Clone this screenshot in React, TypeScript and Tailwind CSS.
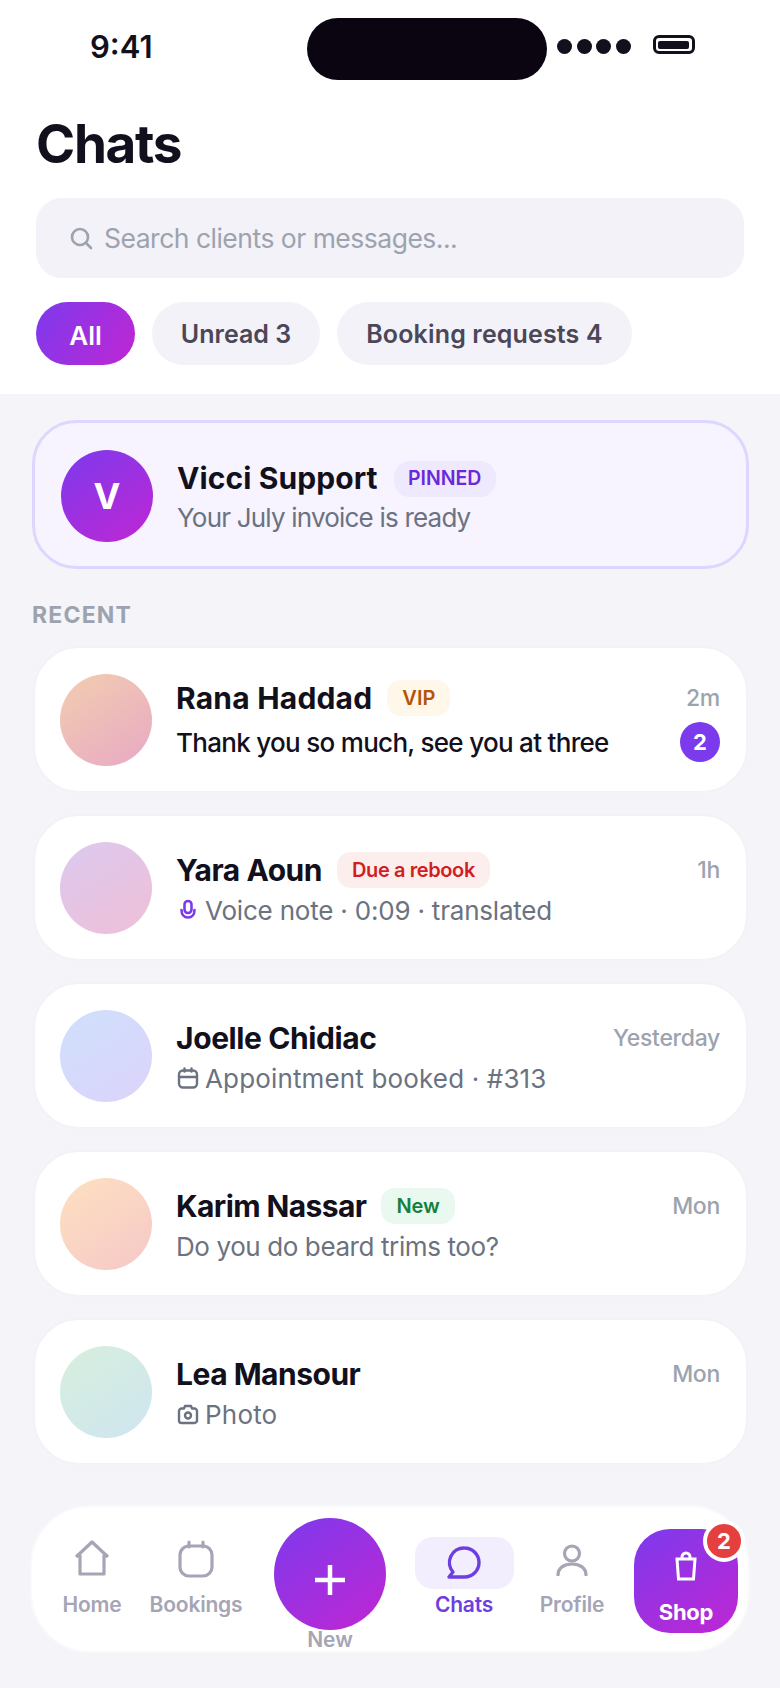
import React from "react";

const font = { fontFamily: "Inter, 'Liberation Sans', sans-serif" };

function Mic() {
  return (
    <svg width="24" height="22" viewBox="0 0 24 22" fill="none" stroke="#7c3aed" strokeWidth="2.6" strokeLinecap="round" className="shrink-0">
      <rect x="8.500" y="2" width="7" height="12" rx="3.500" />
      <path d="M5.500 11c0 4.500 2.500 7.500 6.500 7.500s6.500-3 6.500-7.500" />
    </svg>
  );
}
function Cal() {
  return (
    <svg width="24" height="22" viewBox="0 0 24 22" fill="none" stroke="#6b7280" strokeWidth="2.4" strokeLinecap="round" className="shrink-0">
      <rect x="3" y="3.500" width="18" height="17" rx="4" />
      <path d="M3 10h18M8.500 1.500v3M15.500 1.500v3" />
    </svg>
  );
}
function Cam() {
  return (
    <svg width="24" height="22" viewBox="0 0 24 22" fill="none" stroke="#6b7280" strokeWidth="2.4" strokeLinejoin="round" className="shrink-0">
      <path d="M3 8a2.500 2.500 0 0 1 2.500-2.500H8L9 3h6l1 2.500h2.500A2.500 2.500 0 0 1 21 8v9.500a2.500 2.500 0 0 1-2.500 2.500h-13A2.500 2.500 0 0 1 3 17.500z" />
      <circle cx="12" cy="12.500" r="3" />
    </svg>
  );
}

type Row = {
  name: string;
  nameCls: string;
  time: string;
  grad: string;
  tag?: React.ReactNode;
  msg: React.ReactNode;
  msgCls: string;
  unread?: boolean;
};

const rows: Row[] = [
  {
    name: "Rana Haddad",
    nameCls: "tracking-[0.2px]",
    time: "2m",
    grad: "bg-[linear-gradient(145deg,#f2cdb0,#e8a9c4)]",
    tag: <span className="ml-[15px] h-[36px] px-[15px] rounded-[14px] bg-[#fff7ea] text-[#b4540a] text-[20px] font-semibold flex items-center">VIP</span>,
    msg: <span className="text-[#12101c] font-medium">Thank you so much, see you at three</span>,
    msgCls: "tracking-[-0.7px]",
    unread: true,
  },
  {
    name: "Yara Aoun",
    nameCls: "tracking-[-0.45px]",
    time: "1h",
    grad: "bg-[linear-gradient(145deg,#dcc9f0,#efbfd6)]",
    tag: <span className="ml-[15px] h-[36px] px-[15px] rounded-[14px] bg-[#fdeeee] text-[#cf1f1f] text-[20px] font-semibold flex items-center tracking-[-0.4px]">Due a rebook</span>,
    msg: <span className="flex items-center gap-[5px]"><Mic />Voice note · 0:09 · translated</span>,
    msgCls: "tracking-[-0.2px]",
  },
  {
    name: "Joelle Chidiac",
    nameCls: "tracking-[-0.4px]",
    time: "Yesterday",
    grad: "bg-[linear-gradient(145deg,#cfe0fb,#dcd3fb)]",
    msg: <span className="flex items-center gap-[5px]"><Cal />Appointment booked · #313</span>,
    msgCls: "tracking-[0.15px]",
  },
  {
    name: "Karim Nassar",
    nameCls: "tracking-[-0.6px]",
    time: "Mon",
    grad: "bg-[linear-gradient(145deg,#fde0c0,#f6c8c8)]",
    tag: <span className="ml-[15px] h-[36px] px-[15px] rounded-[14px] bg-[#e9f9ef] text-[#15803d] text-[20px] font-semibold flex items-center">New</span>,
    msg: "Do you do beard trims too?",
    msgCls: "tracking-[-0.4px]",
  },
  {
    name: "Lea Mansour",
    nameCls: "tracking-[-0.5px]",
    time: "Mon",
    grad: "bg-[linear-gradient(145deg,#d6efdc,#cfe5f1)]",
    msg: <span className="flex items-center gap-[5px]"><Cam />Photo</span>,
    msgCls: "tracking-[0.2px]",
  },
];

function ChatRow({ r }: { r: Row }) {
  return (
    <div className="h-[147px] rounded-[46px] bg-white border-2 border-[#f2f2f7] flex items-center pl-[25px] pr-[26px]">
      <div className={`w-[92px] h-[92px] rounded-full shrink-0 ${r.grad}`} />
      <div className={`ml-[24px] flex-1 min-w-0 self-stretch ${r.unread ? "pt-[30px]" : "pt-[34px]"}`}>
        <div className="flex items-center h-[40px]">
          <span className={`text-[30px] font-bold text-[#12101c] ${r.nameCls}`}>{r.name}</span>
          {r.tag}
        </div>
        <div className={`${r.unread ? "mt-[4px]" : "mt-0"} h-[40px] flex items-center text-[26px] text-[#6b7280] ${r.msgCls}`}>{r.msg}</div>
      </div>
      <div className={`self-stretch flex flex-col items-end ${r.unread ? "pt-[35px]" : "pt-[39px]"}`}>
        <span className="text-[23px] leading-[30px] text-[#9ca3af] font-medium tracking-[-0.3px]">{r.time}</span>
        {r.unread && (
          <span className="mt-[9px] w-[40px] h-[40px] rounded-full bg-[#7c3aed] text-white text-[22px] font-bold flex items-center justify-center">2</span>
        )}
      </div>
    </div>
  );
}

function NavItem({ label, children, w }: { label: string; children: React.ReactNode; w: string }) {
  return (
    <div className={`flex flex-col items-center ${w}`}>
      <div className="h-[60px] flex items-center justify-center">{children}</div>
      <span className="mt-[1px] text-[21px] leading-[28px] font-semibold tracking-[-0.2px] text-[#a5a5b5]">{label}</span>
    </div>
  );
}

export default function App() {
  return (
    <div style={font} className="w-[780px] h-[1688px] bg-[#f4f4f9] overflow-hidden flex flex-col">
      <header className="h-[394px] shrink-0 bg-white px-[36px] flex flex-col">
        <div className="h-[98px] flex items-start pt-[18px]">
          <span className="ml-[54px] mt-[11px] text-[31px] leading-[36px] font-semibold text-[#12101c] w-[217px]">9:41</span>
          <div className="w-[240px] h-[62px] rounded-full bg-[#0a0510]" />
          <div className="ml-[10px] mt-[21px] flex gap-[4.500px]">
            <i className="block w-[15px] h-[15px] rounded-full bg-[#12101c]" />
            <i className="block w-[15px] h-[15px] rounded-full bg-[#12101c]" />
            <i className="block w-[15px] h-[15px] rounded-full bg-[#12101c]" />
            <i className="block w-[15px] h-[15px] rounded-full bg-[#12101c]" />
          </div>
          <div className="ml-[22px] mt-[17px] w-[42px] h-[19px] rounded-[6px] border-[3px] border-[#12101c] p-[2.500px]">
            <div className="w-full h-full rounded-[2px] bg-[#12101c]" />
          </div>
        </div>
        <h1 className="mt-[16px] text-[53px] leading-[60px] font-bold text-[#12101c] tracking-[-1.300px]">Chats</h1>
        <div className="mt-[24px] h-[80px] rounded-[26px] bg-[#f2f2f8] flex items-center pl-[33px]">
          <svg width="24" height="24" viewBox="0 0 24 24" fill="none" stroke="#9ca3af" strokeWidth="2.600" strokeLinecap="round">
            <circle cx="11" cy="11" r="8" />
            <path d="m17 17 5 5" />
          </svg>
          <span className="ml-[11px] pt-[2px] text-[26.500px] text-[#9ca3af] tracking-[-0.5px]">Search clients or messages...</span>
        </div>
        <div className="mt-[24px] flex gap-[17px]">
          <span className="w-[99px] h-[63px] pt-[3px] rounded-full bg-[linear-gradient(120deg,#7c3aed,#c026d3)] text-white text-[26px] font-semibold flex items-center justify-center">All</span>
          <span className="w-[168px] h-[63px] pt-[3px] rounded-full bg-[#f2f2f8] text-[#4b4658] text-[25px] font-semibold flex items-center justify-center">Unread 3</span>
          <span className="w-[295px] h-[63px] pt-[3px] rounded-full bg-[#f2f2f8] text-[#4b4658] text-[25px] font-semibold flex items-center justify-center tracking-[0.15px]">Booking requests 4</span>
        </div>
      </header>

      <main className="flex-1 flex flex-col pl-[32px] pr-[31px] pt-[26px]">
        <div className="h-[149px] rounded-[44px] bg-[#f7f3ff] border-[3px] border-[#ddd6fe] flex items-center pl-[26px]">
          <div className="mt-[2px] w-[92px] h-[92px] rounded-full bg-[linear-gradient(145deg,#7c3aed,#c026d3)] text-white text-[36px] font-bold flex items-center justify-center">V</div>
          <div className="ml-[24px] pt-[5px]">
            <div className="flex items-center h-[40px]">
              <span className="text-[30px] font-bold text-[#12101c] tracking-[0.1px]">Vicci Support</span>
              <span className="ml-[16px] w-[102px] h-[36px] rounded-[16px] bg-[#eee9fd] text-[#6d28d9] text-[19.500px] font-semibold flex items-center justify-center">PINNED</span>
            </div>
            <div className="mt-[1px] text-[26px] leading-[36px] text-[#6b7280] tracking-[-0.8px]">Your July invoice is ready</div>
          </div>
        </div>
        <div className="mt-[32px] text-[23px] leading-[28px] font-bold text-[#9ca3af] tracking-[1.200px]">RECENT</div>
        <div className="mt-[17px] mx-[1px] flex flex-col gap-[21px]">
          {rows.map((r) => (
            <ChatRow key={r.name} r={r} />
          ))}
        </div>
      </main>

      <nav className="mx-[30px] mb-[35px] h-[148px] rounded-[60px] bg-white border-2 border-[#f9f9fb] shrink-0 flex items-start pt-[23px] pl-[12px]">
        <NavItem label="Home" w="w-[96px]">
          <svg width="36" height="36" viewBox="0 0 36 36" fill="none" stroke="#a5a5b5" strokeWidth="3.200" strokeLinejoin="round" className="-mt-[4px]">
            <path d="M2 17 18 2l16 15M6 15v19h24V15" />
          </svg>
        </NavItem>
        <NavItem label="Bookings" w="w-[100px] ml-[6px]">
          <svg width="36" height="38" viewBox="0 0 36 38" fill="none" stroke="#a5a5b5" strokeWidth="3.200" strokeLinecap="round" className="-mt-[2px]">
            <rect x="2" y="6" width="32" height="30" rx="9" />
            <path d="M11 2v5M25 2v5" />
          </svg>
        </NavItem>
        <div className="ml-[28px] w-[112px] flex flex-col items-center -mt-[12px]">
          <div className="w-[112px] h-[112px] rounded-full bg-[linear-gradient(145deg,#7c3aed,#c026d3)] flex items-center justify-center pt-[12px]">
            <svg width="30" height="30" viewBox="0 0 30 30" stroke="#fff" strokeWidth="4.500">
              <path d="M15 0v30M0 15h30" />
            </svg>
          </div>
          <span className="text-[21px] leading-[20px] font-semibold text-[#a5a5b5]">New</span>
        </div>
        <div className="ml-[28px] w-[100px] flex flex-col items-center">
          <div className="w-[99px] h-[52px] mt-[7px] rounded-[18px] bg-[#f3eefe] flex items-center justify-center">
            <svg width="36" height="36" viewBox="0 0 36 36" fill="none" stroke="#6d3fe0" strokeWidth="3.400" strokeLinejoin="round">
              <path d="M18.500 3A14.500 14.500 0 0 1 18.500 32H3l4-5A14.500 14.500 0 0 1 18.500 3Z" />
            </svg>
          </div>
          <span className="mt-[2px] text-[21px] leading-[28px] font-semibold text-[#6d3fe0] tracking-[-0.2px]">Chats</span>
        </div>
        <NavItem label="Profile" w="w-[90px] ml-[13px]">
          <svg width="32" height="32" viewBox="0 0 32 32" fill="none" stroke="#a5a5b5" strokeWidth="3.200" strokeLinecap="round">
            <circle cx="16" cy="9.500" r="7.500" />
            <path d="M2 31c0-7 6-11 14-11s14 4 14 11" />
          </svg>
        </NavItem>
        <div className="relative ml-[17px] -mt-[1px] w-[104px] h-[104px] rounded-[36px] bg-[linear-gradient(145deg,#7c3aed,#c026d3)] flex flex-col items-center pt-[22px]">
          <svg width="24" height="30" viewBox="0 0 24 30" fill="none" stroke="#fff" strokeWidth="3">
            <path d="M1.500 8h21M3 8l1.500 20h15L21 8M8 8V6a4 4 0 0 1 8 0v2" />
          </svg>
          <span className="mt-[16px] text-[22px] leading-[30px] font-bold text-white tracking-[-0.3px]">Shop</span>
          <span className="absolute -right-[7px] -top-[9px] w-[42px] h-[42px] rounded-full bg-[#e5403f] border-[4px] border-white text-white text-[22px] font-bold flex items-center justify-center">2</span>
        </div>
      </nav>
    </div>
  );
}
